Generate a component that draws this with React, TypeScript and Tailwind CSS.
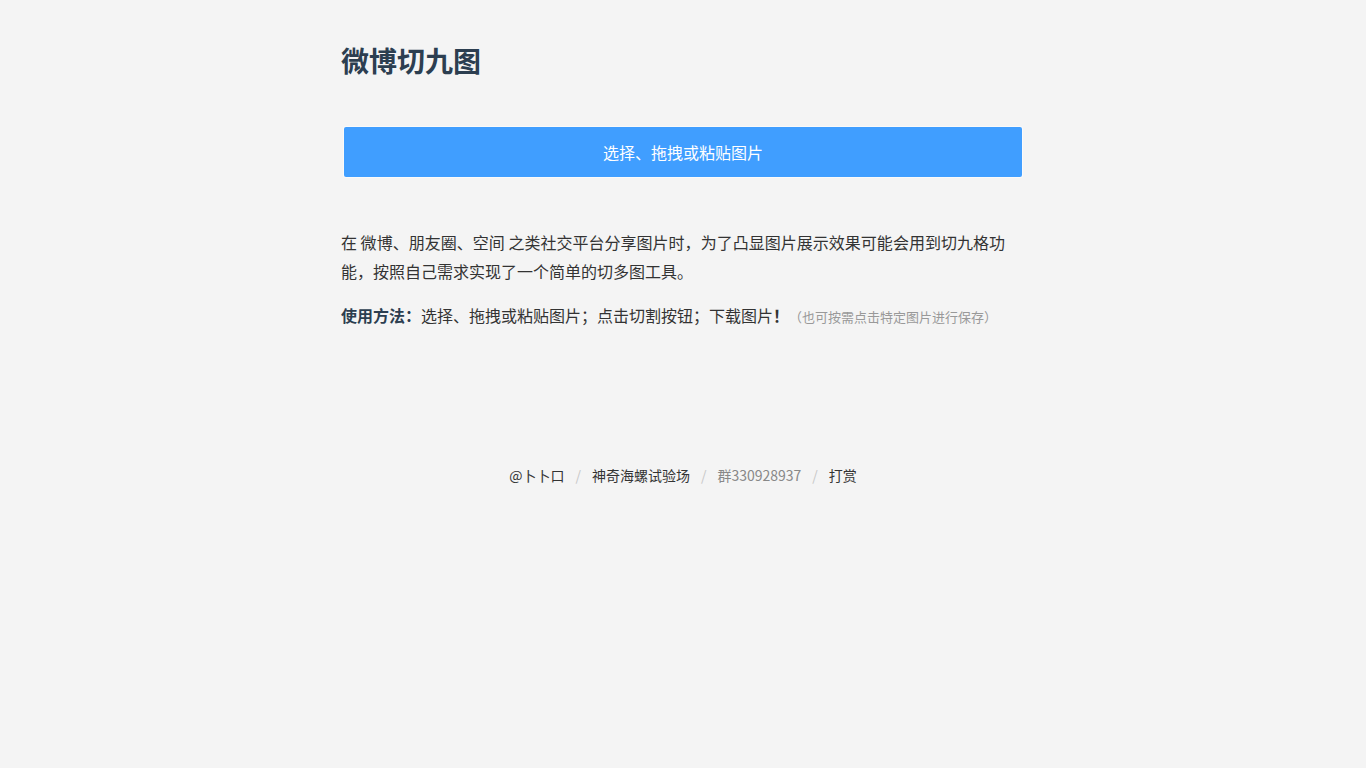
import React from 'react';

const font = { fontFamily: '"Noto Sans CJK SC", "Noto Sans", sans-serif' };

function Sep() {
  return <span className="px-[11px] text-[#c8c8c8]">/</span>;
}

export default function App() {
  return (
    <div className="min-h-screen bg-[#f4f4f4] text-[#333]" style={font}>
      <div className="mx-auto w-[684px] pt-[39px]">
        {/* Header */}
        <h1 className="text-[28px] font-bold leading-[42px] text-[#2c3e50]">微博切九图</h1>

        {/* Upload button */}
        <button className="mx-[3px] mt-[46px] flex h-[50px] w-[678px] items-center justify-center rounded-[2px] bg-[#409eff] text-[16px] text-white shadow-[0_0_0_1px_#fafafa]">
          选择、拖拽或粘贴图片
        </button>

        {/* Description */}
        <div className="mt-[51px] w-[664px] text-[16px] leading-[29px]">
          <p className="text-justify [text-align-last:justify]">
            在 微博、朋友圈、空间 之类社交平台分享图片时，为了凸显图片展示效果可能会用到切九格功
          </p>
          <p>能，按照自己需求实现了一个简单的切多图工具。</p>
        </div>

        <p className="mt-[15px] text-[16px] leading-[29px]">
          <span className="font-bold text-[#2c3e50]">使用方法：</span>
          选择、拖拽或粘贴图片；点击切割按钮；下载图片<span className="font-bold">！</span>
          <span className="text-[13px] text-[#999]">（也可按需点击特定图片进行保存）</span>
        </p>
      </div>

      {/* Footer */}
      <div className="mt-[134px] flex justify-center text-[14px] leading-[20px]">
        <span className="text-[#333]">@卜卜口</span>
        <Sep />
        <span className="text-[#333]">神奇海螺试验场</span>
        <Sep />
        <span className="text-[#888]">群330928937</span>
        <Sep />
        <span className="text-[#333]">打赏</span>
      </div>
    </div>
  );
}
